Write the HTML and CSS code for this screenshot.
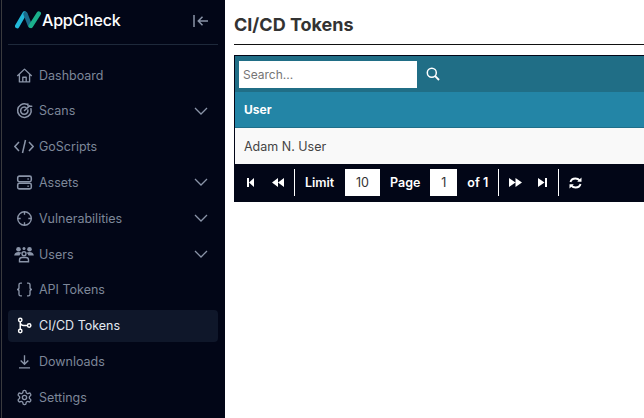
FILE: index.html
```html
<!DOCTYPE html>
<html lang="en">
<head>
  <meta charset="UTF-8">
  <title>CI/CD Tokens</title>
  <link rel="stylesheet" href="styles.css">
</head>
<body>
  <div class="app">
    <!-- Sidebar -->
    <aside class="sidebar">
      <div class="brand">
        <div class="logo">
          <svg width="26" height="18" viewBox="0 0 26 18" fill="none" stroke-width="4.400" stroke-linecap="round">
            <path d="M2.200 15.200 9.500 2.500" stroke="#22b8d8"/>
            <path d="M10.500 3 15 14.500" stroke="#1a6a8a"/>
            <path d="M15.800 15 23.800 2.500" stroke="#1bb08c"/>
          </svg>
          <span class="logo-text">AppCheck</span>
        </div>
        <svg class="collapse" width="16" height="14" viewBox="0 0 16 14" fill="none" stroke="#8a94a8" stroke-width="1.500">
          <path d="M1 1v12M15 7H5.500M9.500 2.800 5.300 7l4.200 4.200"/>
        </svg>
      </div>
      <nav class="nav">
        <a class="nav-item">
          <svg class="icon" viewBox="0 0 20 20" fill="none" stroke="#8a94a8" stroke-width="1.600" stroke-linejoin="round"><path d="M1.500 10.500 10 2.500 18.500 10.500M4 8.500V17.500H16V8.500M8 17.500V12h4v5.500"/></svg>
          <span>Dashboard</span>
        </a>
        <a class="nav-item">
          <svg class="icon" viewBox="0 0 20 20" fill="none" stroke="#8a94a8" stroke-width="1.800" stroke-linecap="round"><path d="M12.500 2.600A8 8 0 1 0 17.600 8M11.500 6.300A4.300 4.300 0 1 0 14 9.500M10 10l6-5.500M14 4.500V2.500M16 5h2.500"/></svg>
          <span>Scans</span>
          <svg class="chevron" width="14" height="8" viewBox="0 0 14 8" fill="none" stroke="#8a94a8" stroke-width="1.300"><path d="M1 1l6 6 6-6"/></svg>
        </a>
        <a class="nav-item">
          <svg class="icon icon-wide" viewBox="0 0 20 14" fill="none" stroke="#8a94a8" stroke-width="1.500"><path d="M5 2.500.9 7 5 11.500M15 2.500 19.100 7 15 11.500M11.500 .5 8.500 13.500"/></svg>
          <span>GoScripts</span>
        </a>
        <a class="nav-item">
          <svg class="icon" viewBox="0 0 20 20" fill="none" stroke="#8a94a8" stroke-width="1.800"><rect x="2" y="2.500" width="16" height="6.500" rx="2"/><rect x="2" y="11" width="16" height="6.500" rx="2"/><path d="M13.500 5.800h1.500M13.500 14.300h1.500"/></svg>
          <span>Assets</span>
          <svg class="chevron" width="14" height="8" viewBox="0 0 14 8" fill="none" stroke="#8a94a8" stroke-width="1.300"><path d="M1 1l6 6 6-6"/></svg>
        </a>
        <a class="nav-item">
          <svg class="icon" viewBox="0 0 20 20" fill="none" stroke="#8a94a8" stroke-width="1.600"><circle cx="10" cy="10" r="8"/><path d="M10 1.500v4M10 14.500v4M1.500 10h4M14.500 10h4"/></svg>
          <span>Vulnerabilities</span>
          <svg class="chevron" width="14" height="8" viewBox="0 0 14 8" fill="none" stroke="#8a94a8" stroke-width="1.300"><path d="M1 1l6 6 6-6"/></svg>
        </a>
        <a class="nav-item">
          <svg class="icon icon-wide" viewBox="0 0 20 16" fill="#8a94a8"><circle cx="4.500" cy="2.800" r="2.300"/><circle cx="15.500" cy="2.800" r="2.300"/><circle cx="10" cy="2" r="1.500"/><path d="M.2 9Q.5 5.500 4.500 5.500 6 5.500 7.500 6.300 5.800 7.200 5.600 9ZM19.800 9Q19.500 5.500 15.500 5.500 14 5.500 12.500 6.300 14.200 7.200 14.400 9Z"/><circle cx="10" cy="7.300" r="2" fill="none" stroke="#8a94a8" stroke-width="1.400"/><path d="M5.500 15.300V13.500Q5.500 11 8 11H12Q14.500 11 14.500 13.500V15.300Z" fill="none" stroke="#8a94a8" stroke-width="1.400"/></svg>
          <span>Users</span>
          <svg class="chevron" width="14" height="8" viewBox="0 0 14 8" fill="none" stroke="#8a94a8" stroke-width="1.300"><path d="M1 1l6 6 6-6"/></svg>
        </a>
        <a class="nav-item">
          <svg class="icon" viewBox="0 0 20 20" fill="none" stroke="#8a94a8" stroke-width="1.600"><path d="M7 2.500H5.500Q3.500 2.500 3.500 4.500V8Q3.500 10 1.200 10 3.500 10 3.500 12V15.500Q3.500 17.500 5.500 17.500H7M13 2.500H14.500Q16.500 2.500 16.500 4.500V8Q16.500 10 18.800 10 16.500 10 16.500 12V15.500Q16.500 17.500 14.500 17.500H13"/></svg>
          <span>API Tokens</span>
        </a>
        <a class="nav-item active">
          <svg class="icon" viewBox="0 0 20 20" fill="none" stroke="#fff" stroke-width="1.700"><circle cx="5" cy="3.500" r="2"/><circle cx="5" cy="16.500" r="2"/><circle cx="15.500" cy="10" r="2"/><path d="M5 5.500V14.500M5 7Q5.500 10 9 10H13.500"/></svg>
          <span>CI/CD Tokens</span>
        </a>
        <a class="nav-item">
          <svg class="icon" viewBox="0 0 20 20" fill="none" stroke="#8a94a8" stroke-width="1.600"><path d="M10 2.500v10.500M5.500 8.800 10 13.300 14.500 8.800M3.500 17.500h13"/></svg>
          <span>Downloads</span>
        </a>
        <a class="nav-item">
          <svg class="icon" viewBox="0 0 24 24" fill="none" stroke="#8a94a8" stroke-width="1.900" stroke-linejoin="round"><path d="M12.200 2h-.4a2 2 0 0 0-2 2v.2a2 2 0 0 1-1 1.700l-.4.300a2 2 0 0 1-2 0l-.2-.1a2 2 0 0 0-2.700.7l-.2.400a2 2 0 0 0 .7 2.700l.2.100a2 2 0 0 1 1 1.700v.6a2 2 0 0 1-1 1.700l-.2.100a2 2 0 0 0-.7 2.700l.2.400a2 2 0 0 0 2.700.7l.2-.1a2 2 0 0 1 2 0l.4.300a2 2 0 0 1 1 1.700v.2a2 2 0 0 0 2 2h.4a2 2 0 0 0 2-2v-.2a2 2 0 0 1 1-1.700l.4-.3a2 2 0 0 1 2 0l.2.100a2 2 0 0 0 2.700-.7l.2-.4a2 2 0 0 0-.7-2.700l-.2-.1a2 2 0 0 1-1-1.700v-.6a2 2 0 0 1 1-1.700l.2-.1a2 2 0 0 0 .7-2.700l-.2-.4a2 2 0 0 0-2.700-.7l-.2.100a2 2 0 0 1-2 0l-.4-.3a2 2 0 0 1-1-1.700V4a2 2 0 0 0-2-2z"/><circle cx="12" cy="12" r="3"/></svg>
          <span>Settings</span>
        </a>
      </nav>
    </aside>

    <!-- Main content -->
    <main class="content">
      <h1 class="page-title">CI/CD Tokens</h1>
      <div class="grid">
        <div class="toolbar">
          <input class="search" type="text" placeholder="Search...">
          <svg class="search-icon" width="14" height="14" viewBox="0 0 14 14" fill="none" stroke="#fff" stroke-width="1.500"><circle cx="5.800" cy="5.800" r="4.500"/><path d="M9.200 9.200 13 13" stroke-width="1.900"/></svg>
        </div>
        <div class="grid-head">User</div>
        <div class="grid-row">Adam N. User</div>
        <div class="pager">
          <svg class="pager-icon" width="7" height="9" viewBox="0 0 7 9" fill="#fff"><path d="M0 0h2v9H0zM7 0v9L2 4.500z"/></svg>
          <svg class="pager-icon rewind" width="12" height="9" viewBox="0 0 12 9" fill="#fff"><path d="M6 0v9L0 4.500zM12 0v9L6 4.500z"/></svg>
          <span class="sep"></span>
          <span class="pager-label limit-label">Limit</span>
          <span class="pager-box limit">10</span>
          <span class="pager-label">Page</span>
          <span class="pager-box page">1</span>
          <span class="pager-label of">of 1</span>
          <span class="sep"></span>
          <svg class="pager-icon" width="13" height="9" viewBox="0 0 13 9" fill="#fff"><path d="M0 0v9L6.500 4.500zM6.500 0v9L13 4.500z"/></svg>
          <svg class="pager-icon last" width="9" height="9" viewBox="0 0 9 9" fill="#fff"><path d="M0 0v9L6.500 4.500zM7 0h2v9H7z"/></svg>
          <span class="sep sep-wide"></span>
          <svg class="pager-icon" width="13" height="12" viewBox="0 0 13 12" fill="none" stroke="#fff" stroke-width="1.900"><path d="M1.500 5Q2.300 1.500 6.500 1.500 9 1.500 10.800 3.500M11.500 7Q10.700 10.500 6.500 10.500 4 10.500 2.200 8.500"/><path d="M12.500 .5V4.800H8.200zM.5 11.500V7.200H4.800z" fill="#fff" stroke="none"/></svg>
        </div>
      </div>
    </main>
  </div>
</body>
</html>
```

FILE: styles.css
```css
* {
  box-sizing: border-box;
}
html, body {
  height: 100%;
}
body {
  margin: 0;
  overflow: hidden;
  background: #fff;
  font-family: Inter, 'Liberation Sans', sans-serif;
}
.app {
  display: flex;
  height: 418px;
}
.sidebar {
  width: 225px;
  flex: none;
  background: #020617;
  padding: 0 7px 0 8px;
  background-image: linear-gradient(#3a3a3e, #3a3a3e);
  background-size: 1px 100%;
  background-position: 1px 0;
  background-repeat: no-repeat;
}
.brand {
  height: 45px;
  display: flex;
  align-items: center;
  justify-content: space-between;
  padding: 0 9px 3px 7px;
  border-bottom: 1px solid #1e293b;
}
.logo {
  display: flex;
  align-items: center;
  gap: 1px;
  margin-bottom: 2px;
}
.logo-text {
  color: #fff;
  font-size: 16px;
  font-weight: 500;
  letter-spacing: -0.2px;
}
.nav {
  display: flex;
  flex-direction: column;
  padding-top: 14.100px;
}
.nav-item {
  height: 32px;
  margin-bottom: 3.800px;
  flex: none;
  display: flex;
  align-items: center;
  gap: 6px;
  padding: 0 10px 0 8px;
  border-radius: 4px;
  color: #7d8799;
  font-size: 12.500px;
}
.nav-item .chevron {
  margin-left: auto;
}
.nav-item.active {
  background: #0f172a;
  color: #e2e8f0;
}
.icon {
  width: 17px;
  height: 17px;
  flex: none;
}
.icon-wide {
  width: 20px;
  margin: 0 -1px 0 -2px;
}
.content {
  flex: 1;
  min-width: 0;
  padding: 0 0 0 9px;
}
.page-title {
  margin: 0;
  height: 45px;
  line-height: 50px;
  font-size: 18px;
  font-weight: 700;
  color: #333;
  border-bottom: 1px solid #111;
}
.grid {
  margin-top: 10px;
  border: 1px solid #020617;
  border-right: 0;
}
.toolbar {
  height: 36px;
  display: flex;
  align-items: center;
  gap: 9px;
  padding: 0 4px;
  background: #206e86;
}
.search {
  width: 178px;
  height: 27px;
  border: 0;
  padding: 0 4px;
  font: 12px Inter, sans-serif;
  background: #fff;
}
.search::placeholder {
  color: #757575;
}
.grid-head {
  height: 36px;
  line-height: 35px;
  padding-left: 9px;
  background: #2385a6;
  color: #fff;
  font-size: 12px;
  font-weight: 700;
  border-bottom: 1px solid #1f6f8a;
}
.grid-row {
  height: 36px;
  line-height: 37px;
  padding-left: 9px;
  background: #f9f9f9;
  color: #444;
  font-size: 12.500px;
}
.pager {
  height: 37px;
  display: flex;
  align-items: center;
  background: #020617;
  color: #fff;
  font-size: 12.500px;
  margin-left: -1px;
  padding-left: 13px;
}
.pager-icon {
  flex: none;
}
.rewind {
  margin-left: 18px;
}
.sep {
  width: 1px;
  height: 27px;
  background: #fff;
  margin: 0 10px;
}
.sep-wide {
  margin-left: 11px;
}
.pager-label {
  font-weight: 600;
}
.limit-label {
  width: 30px;
}
.pager-box {
  height: 27px;
  line-height: 27px;
  background: #fff;
  color: #333;
  text-align: center;
  font-weight: 400;
}
.limit {
  width: 35px;
  margin: 0 10px;
}
.page {
  width: 27px;
  margin-left: 10px;
}
.of {
  margin-left: 10px;
  white-space: nowrap;
}
.last {
  margin-left: 16px;
}
```
